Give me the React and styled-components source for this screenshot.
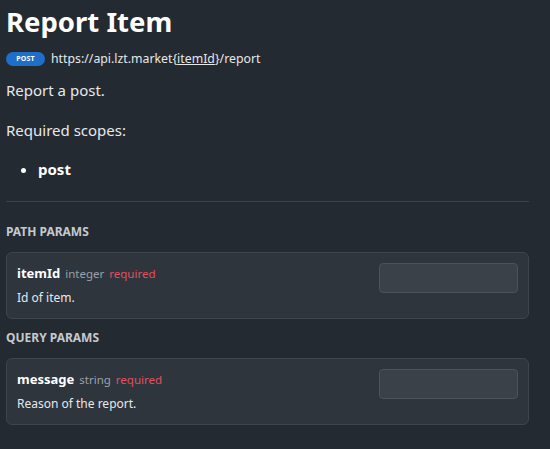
import React from 'react';
import styled, { createGlobalStyle } from 'styled-components';

const GlobalStyle = createGlobalStyle`
  html, body {
    margin: 0;
    background: #242a31;
  }
  body {
    font-family: 'Noto Sans', 'Open Sans', sans-serif;
    color: #e6e8eb;
  }
`;

const Page = styled.div`
  padding: 0 21px 20px 6px;
`;

const Title = styled.h1`
  margin: 0;
  padding-top: 2px;
  font-size: 27.5px;
  font-weight: 700;
  line-height: 40px;
  color: #ffffff;
`;

const Endpoint = styled.div`
  display: flex;
  align-items: center;
  gap: 6px;
  margin-top: 8px;
  font-size: 12.3px;
  color: #e6e8eb;
`;

const MethodBadge = styled.span`
  display: inline-flex;
  align-items: center;
  justify-content: center;
  width: 39px;
  height: 14px;
  border-radius: 8px;
  background: #1f6fc8;
  color: #ffffff;
  font-size: 7px;
  font-weight: 700;
  letter-spacing: 0.2px;
`;

const PathVar = styled.span`
  text-decoration: underline;
`;

const Text = styled.p`
  margin: ${({ $mt }) => $mt || 0}px 0 0;
  font-size: 15px;
  line-height: 22px;
  color: #e6e8eb;
`;

const Scopes = styled.ul`
  margin: 17px 0 0;
  padding-left: 32px;
  font-size: 15px;
  line-height: 22px;

  li {
    font-weight: 700;
    color: #ffffff;
  }
`;

const Divider = styled.hr`
  margin: 21px 0 0;
  border: 0;
  border-top: 1px solid #3a424b;
`;

const SectionLabel = styled.h3`
  margin: ${({ $mt }) => $mt}px 0 0;
  font-size: 12px;
  font-weight: 700;
  line-height: 16px;
  color: #c4c9cf;
`;

const ParamCard = styled.div`
  display: flex;
  align-items: flex-start;
  justify-content: space-between;
  margin-top: 12px;
  padding: 10px;
  border: 1px solid #3e454e;
  border-radius: 6px;
  background: #2e353d;
  height: 45px;
`;

const ParamInfo = styled.div`
  display: flex;
  flex-direction: column;
  gap: 7px;
  padding-top: 1px;
`;

const ParamHead = styled.div`
  display: flex;
  align-items: baseline;
  gap: 5px;
`;

const ParamName = styled.span`
  font-size: 13px;
  font-weight: 700;
  color: #ffffff;
`;

const ParamType = styled.span`
  font-size: 11.5px;
  color: ${({ $required }) => ($required ? '#e0505f' : '#9aa1a9')};
`;

const ParamDesc = styled.span`
  font-size: 12px;
  color: #e6e8eb;
`;

const ParamInput = styled.input`
  width: 139px;
  height: 30px;
  box-sizing: border-box;
  border: 1px solid #4a525c;
  border-radius: 4px;
  background: #3a4149;
  outline: none;
`;

const params = {
  path: [{ name: 'itemId', type: 'integer', desc: 'Id of item.' }],
  query: [{ name: 'message', type: 'string', desc: 'Reason of the report.' }],
};

const Param = ({ name, type, desc }) => (
  <ParamCard>
    <ParamInfo>
      <ParamHead>
        <ParamName>{name}</ParamName>
        <ParamType>{type}</ParamType>
        <ParamType $required>required</ParamType>
      </ParamHead>
      <ParamDesc>{desc}</ParamDesc>
    </ParamInfo>
    <ParamInput />
  </ParamCard>
);

const App = () => (
  <>
    <GlobalStyle />
    <Page>
      <Title>Report Item</Title>
      <Endpoint>
        <MethodBadge>POST</MethodBadge>
        <span>
          https://api.lzt.market{'{'}
          <PathVar>itemId</PathVar>
          {'}'}/report
        </span>
      </Endpoint>
      <Text $mt={12}>Report a post.</Text>
      <Text $mt={18}>Required scopes:</Text>
      <Scopes>
        <li>post</li>
      </Scopes>
      <Divider />
      <SectionLabel $mt={22}>PATH PARAMS</SectionLabel>
      {params.path.map((p) => (
        <Param key={p.name} {...p} />
      ))}
      <SectionLabel $mt={11}>QUERY PARAMS</SectionLabel>
      {params.query.map((p) => (
        <Param key={p.name} {...p} />
      ))}
    </Page>
  </>
);

export default App;
